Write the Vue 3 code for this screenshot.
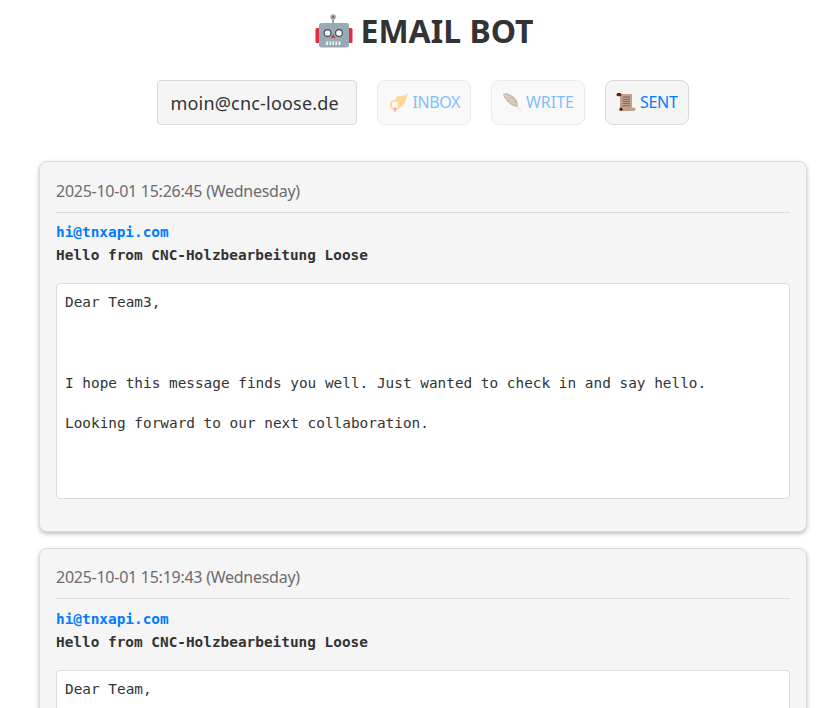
<script setup>
const mails = [
  {
    date: '2025-10-01 15:26:45 (Wednesday)',
    from: 'hi@tnxapi.com',
    subject: 'Hello from CNC-Holzbearbeitung Loose',
    body: 'Dear Team3,\n\n\n\nI hope this message finds you well. Just wanted to check in and say hello.\n\nLooking forward to our next collaboration.\n\n\n\n',
  },
  {
    date: '2025-10-01 15:19:43 (Wednesday)',
    from: 'hi@tnxapi.com',
    subject: 'Hello from CNC-Holzbearbeitung Loose',
    body: 'Dear Team,\n\n\n\nI hope this message finds you well. Just wanted to check in and say hello.\n\nLooking forward to our next collaboration.\n\n\n\n',
  },
]
</script>

<template>
  <div class="page">
    <h1 class="title">
      <svg class="robot" viewBox="0 0 38 36" aria-hidden="true">
        <rect x="0.5" y="15" width="5" height="15" rx="1.5" fill="#dd2e44" />
        <rect x="32.5" y="15" width="5" height="15" rx="1.5" fill="#dd2e44" />
        <rect x="17.3" y="5" width="1.6" height="6" fill="#7d8f99" />
        <circle cx="18.100" cy="4" r="2.800" fill="#99aab5" />
        <circle cx="18.100" cy="4" r="1.100" fill="#dd2e44" />
        <rect x="4" y="10" width="30" height="24.500" rx="2.500" fill="#99aab5" />
        <circle cx="12.500" cy="20" r="3.400" fill="#f5f8fa" stroke="#3f4a50" stroke-width="1.100" />
        <circle cx="24" cy="20" r="3.400" fill="#f5f8fa" stroke="#3f4a50" stroke-width="1.100" />
        <path d="M18.200 21l2.400 4h-4.800z" fill="#dd2e44" />
        <rect x="11" y="28.500" width="14.500" height="3.600" rx="1.200" fill="#f5f8fa" />
        <path d="M13.800 28.500v3.600M16.800 28.500v3.600M19.800 28.500v3.600M22.800 28.500v3.600" stroke="#66757f" stroke-width="0.900" />
      </svg>
      <span>EMAIL BOT</span>
    </h1>

    <div class="toolbar">
      <input class="account" type="text" value="moin@cnc-loose.de" />
      <button class="tab dim inbox" type="button">
        <svg class="glyph" viewBox="0 0 20 20" aria-hidden="true">
          <path d="M9 4C13 5 17 3.500 20 1L17 10C16 13 14 15 11 16C13 12 11 8 7 8C8 7 9 5.500 9 4z" fill="#ffac33" />
          <circle cx="7" cy="13" r="4.200" fill="none" stroke="#ffac33" stroke-width="2" />
          <path d="M7 15.500v4" stroke="#dd2e44" stroke-width="1.500" />
        </svg>
        <span>INBOX</span>
      </button>
      <button class="tab dim" type="button">
        <svg class="glyph" viewBox="0 0 20 20" aria-hidden="true">
          <path d="M1 2C5 0 11 3 14.500 8C16 11 16 13 15.500 15C10 15 3 9 1 2z" fill="#a0714f" />
          <path d="M3 3.500L9 5M4 6.500L12 8.500M6.500 10L14 11.500" stroke="#d9c3ad" stroke-width="0.800" />
          <path d="M2 2.500C7 7 13 12 19 19" fill="none" stroke="#c9b09a" stroke-width="1" />
        </svg>
        <span>WRITE</span>
      </button>
      <button class="tab sent" type="button">
        <svg class="glyph" viewBox="0 0 20 20" aria-hidden="true">
          <rect x="4" y="2" width="12" height="15" fill="#c1a28e" />
          <rect x="0.500" y="1" width="5" height="3.200" rx="1.500" fill="#662113" />
          <rect x="4" y="15.500" width="15.500" height="3.500" rx="1.700" fill="#c1a28e" />
          <circle cx="5" cy="17.200" r="1.700" fill="#662113" />
          <path d="M6.500 5h7.500M6.500 7.200h7.500M6.500 9.400h7.500M6.500 11.600h7.500M6.500 13.800h7.500" stroke="#7f5a46" stroke-width="0.900" />
        </svg>
        <span>SENT</span>
      </button>
    </div>

    <article v-for="mail in mails" :key="mail.date" class="card">
      <div class="date">{{ mail.date }}</div>
      <div class="from">{{ mail.from }}</div>
      <div class="subject">{{ mail.subject }}</div>
      <pre class="body">{{ mail.body }}</pre>
    </article>
  </div>
</template>

<style scoped>
.page {
  box-sizing: border-box;
  height: 708px;
  overflow: hidden;
  padding-left: 7px;
  background: #fff;
  font-family: "Noto Sans", "Open Sans", sans-serif;
  color: #333;
}
.title {
  display: flex;
  justify-content: center;
  align-items: center;
  gap: 8px;
  margin: 0;
  padding: 12px 0 0 2px;
  height: 38px;
  font-size: 32px;
  line-height: 38px;
  font-weight: 700;
  color: #333;
}
.robot {
  width: 38px;
  height: 36px;
}
.toolbar {
  display: flex;
  justify-content: center;
  gap: 20px;
  margin-top: 30px;
}
.account {
  box-sizing: border-box;
  width: 200px;
  height: 45px;
  padding: 0 12px;
  border: 1px solid #d9d9d9;
  border-radius: 4px;
  background: #f5f5f5;
  font: 18px "Noto Sans", sans-serif;
  letter-spacing: 0.2px;
  color: #333;
}
.tab {
  display: flex;
  align-items: center;
  gap: 4px;
  box-sizing: border-box;
  height: 45px;
  padding: 0 10px 2px;
  border: 1px solid #d9d9d9;
  border-radius: 8px;
  background: #f5f5f5;
  font: 16px "Noto Sans", sans-serif;
  color: #007bff;
}
.tab.dim {
  opacity: 0.5;
}
.tab.inbox span {
  letter-spacing: -0.4px;
}
.tab.sent span {
  letter-spacing: -0.3px;
}
.glyph {
  width: 20px;
  height: 20px;
}
.card {
  box-sizing: border-box;
  width: 768px;
  margin: 36.4px auto 0;
  padding: 16px;
  border: 1px solid #ddd;
  border-radius: 8px;
  background: #f5f5f5;
  box-shadow: 0 2px 4px rgba(0, 0, 0, 0.25);
}
.card + .card {
  margin-top: 16px;
}
.date {
  padding: 0.2px 0 9.1px;
  border-bottom: 1px solid #ddd;
  font-size: 16px;
  line-height: 24px;
  letter-spacing: -0.26px;
  color: #6c6c6c;
}
.from,
.subject {
  font-family: "DejaVu Sans Mono", monospace;
  font-size: 14.4px;
  line-height: 23px;
  font-weight: 700;
}
.from {
  margin-top: 8.3px;
  color: #007bff;
}
.subject {
  color: #333;
}
.body {
  box-sizing: border-box;
  height: 216px;
  margin: 16px 0;
  padding: 8px;
  border: 1px solid #ddd;
  border-radius: 4px;
  background: #fff;
  font-family: "DejaVu Sans Mono", monospace;
  font-size: 14.4px;
  line-height: 20.2px;
  color: #333;
  overflow: hidden;
}
</style>
